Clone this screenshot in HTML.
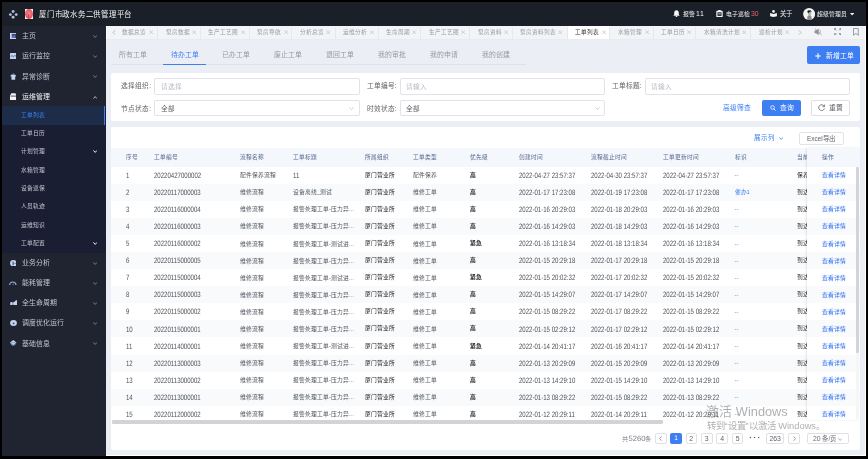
<!DOCTYPE html>
<html lang="zh-CN">
<head>
<meta charset="utf-8">
<style>
*{box-sizing:border-box;margin:0;padding:0}
html,body{width:868px;height:459px;overflow:hidden;background:#000}
body{position:relative;font-family:"Liberation Sans",sans-serif;color:#606266}
.a{position:absolute;white-space:nowrap}
svg{display:block}
#hdr{left:2px;top:2px;width:864px;height:24px;background:#1b1f28}
#side{left:2px;top:26px;width:103.5px;height:430px;background:#1f2430}
#main{left:105.5px;top:26px;width:760.5px;height:429px;background:#ebeef5}
.ht{font-size:5.9px;color:#eceef2;line-height:8px;top:10.4px;font-weight:500}
.mi{left:21.6px;font-size:6.9px;line-height:10px;color:#c3c7d0;height:10px}
.si{left:21.1px;font-size:5.75px;line-height:8px;color:#c3c7d0;height:8px}
.chev{left:92.6px;width:4.4px;height:3px}
.ic{left:9.6px;width:6.6px;height:6px}
</style>
</head>
<body>
<div id="root" style="position:absolute;left:0;top:0;width:868px;height:459px;will-change:transform">
<div class="a" id="hdr"></div>
<div class="a" id="side"></div>
<div class="a" id="main"></div>
<!-- header -->
<svg class="a" style="left:8px;top:8.6px" width="11" height="11" viewBox="0 0 11 11">
<circle cx="5.1" cy="2.5" r="1.45" fill="#aebbdb"/><circle cx="2.4" cy="5.6" r="1.45" fill="#aebbdb"/>
<circle cx="8.2" cy="5.6" r="1.45" fill="#aebbdb"/><circle cx="5.1" cy="8.3" r="1.45" fill="#aebbdb"/></svg>
<div class="a" style="left:24.6px;top:9px;width:8.2px;height:9.9px;background:#f4f4f4"></div>
<div class="a" style="left:24.7px;top:9.2px;width:8px;height:9.5px;border-radius:50%;background:radial-gradient(circle at 50% 45%,#f08a90 0%,#e85a62 55%,#e04850 100%)"></div>
<div class="a" style="left:28.4px;top:13.5px;width:0.8px;height:5px;background:#e0454e"></div>
<div class="a" style="left:38.6px;top:10.2px;font-size:7.7px;line-height:10px;color:#f2f3f5;font-weight:500;transform:scaleX(0.97);transform-origin:0 50%">厦门市政水务二供管理平台</div>

<svg class="a" style="left:672.8px;top:10px" width="7" height="7" viewBox="0 0 7 7"><path d="M3.5 0.3C2 0.3 1.2 1.5 1.2 3V4.6L0.3 5.7H6.7L5.8 4.6V3C5.8 1.5 5 0.3 3.5 0.3Z" fill="#f6f6f6"/><circle cx="3.5" cy="6.3" r="0.8" fill="#f6f6f6"/></svg>
<div class="a ht" style="left:682.5px;top:9.9px;color:#f2f3f5">报警<span style="font-size:6.9px;margin-left:1.6px;letter-spacing:0.6px">11</span></div>
<svg class="a" style="left:715.7px;top:10.2px" width="7" height="7.2" viewBox="0 0 7 7.2"><rect x="0.3" y="0.8" width="6.4" height="6.3" rx="0.7" fill="#f6f6f6"/><rect x="1.5" y="2.3" width="4" height="3.6" fill="#1b1f28"/><rect x="2.2" y="0" width="2.6" height="1.5" rx="0.3" fill="#f6f6f6"/><rect x="2.1" y="3.5" width="2.8" height="0.8" fill="#f6f6f6"/></svg>
<div class="a ht" style="left:725.5px;top:9.9px;color:#f2f3f5">电子巡检<span style="color:#e8646b;font-size:6.9px;margin-left:1.5px;font-weight:400">30</span></div>
<svg class="a" style="left:770.2px;top:10.2px" width="7" height="7" viewBox="0 0 7 7"><circle cx="3.5" cy="1.4" r="1.3" fill="#f6f6f6"/><path d="M0.1 2.9L3.5 4.1L6.9 2.9V6.3L3.5 7L0.1 6.3Z" fill="#f6f6f6"/></svg>
<div class="a ht" style="left:780px;top:9.7px;font-size:6.3px;color:#f2f3f5">关于</div>
<svg class="a" style="left:803.2px;top:7.9px" width="12.2" height="12.2" viewBox="0 0 12.2 12.2"><circle cx="6.1" cy="6.1" r="6" fill="#f4f4f4"/>
<path d="M4 12L4.5 8.4L5.5 7.2H7.6L8.4 8.6L8.8 12Z" fill="#8a8a8a"/><ellipse cx="6.6" cy="5.2" rx="1.6" ry="2.1" fill="#b0b0b0"/><path d="M4.6 4.4C4.6 2.6 6 2 7 2.2C8.2 2.4 8.6 3.2 8.4 4.2L7.4 3.6L5.8 4.6Z" fill="#1e1e1e"/><ellipse cx="5.4" cy="3.6" rx="0.9" ry="1.1" fill="#111"/></svg>
<div class="a ht" style="left:817.4px;top:9.9px;font-size:5.8px;color:#f2f3f5">超级管理员</div>
<svg class="a" style="left:849.8px;top:13px" width="4.2" height="2.6" viewBox="0 0 4.2 2.6"><path d="M0 0H4.2L2.1 2.6Z" fill="#f2f2f2"/></svg>
<!-- sidebar -->
<div class="a" style="left:2px;top:106px;width:103.5px;height:147px;background:#1a1e33"></div>
<div class="a" style="left:2px;top:105.8px;width:102.2px;height:19.2px;background:#1c2c49"></div>
<div class="a" style="left:104px;top:105.8px;width:1.4px;height:19.2px;background:#3e7ef2"></div>
<svg class="a" style="left:9.6px;top:32.6px" width="6.8" height="6.2" viewBox="0 0 6.8 6.2"><rect x="0" y="0" width="6.8" height="6.2" fill="#c4d3ee"/><rect x="1.8" y="0.9" width="4.2" height="4" fill="#3a3f7a"/><rect x="2.6" y="2.6" width="0.9" height="2.3" fill="#8ea6dc"/><rect x="4.2" y="1.8" width="0.9" height="3.1" fill="#7a6fc8"/></svg>
<div class="a mi" style="top:31.40px;color:#c0c4cc">主页</div>
<svg class="a chev" style="left:92.6px;top:34.90px" viewBox="0 0 4.4 3"><path d="M0.4 0.4L2.2 2.4L4 0.4" stroke="#8a909c" stroke-width="0.8" fill="none"/></svg>
<svg class="a" style="left:9.7px;top:52.9px" width="6.6" height="6.1" viewBox="0 0 6.6 6.1"><rect x="0" y="0" width="6.6" height="6.1" rx="0.6" fill="#c4d3ee"/><path d="M0.6 3.3L2.2 2.8L3.4 3.8L4.6 2.6L6 3.1" stroke="#4a4f7a" stroke-width="0.8" fill="none"/></svg>
<div class="a mi" style="top:51.40px;color:#c0c4cc">运行监控</div>
<svg class="a chev" style="left:92.6px;top:54.90px" viewBox="0 0 4.4 3"><path d="M0.4 0.4L2.2 2.4L4 0.4" stroke="#8a909c" stroke-width="0.8" fill="none"/></svg>
<svg class="a" style="left:9.7px;top:73.1px" width="6.6" height="6.8" viewBox="0 0 6.6 6.8"><path d="M3.3 0.3L4.6 1.5H2Z" fill="#9fb2dc"/><path d="M1.2 1.8H5.4L6.4 3.2L5.2 3.6V6.8H1.4V3.6L0.2 3.2Z" fill="#c4d3ee"/></svg>
<div class="a mi" style="top:71.80px;color:#c0c4cc">异常诊断</div>
<svg class="a chev" style="left:92.6px;top:75.30px" viewBox="0 0 4.4 3"><path d="M0.4 0.4L2.2 2.4L4 0.4" stroke="#8a909c" stroke-width="0.8" fill="none"/></svg>
<svg class="a" style="left:9.7px;top:92.9px" width="6.8" height="7" viewBox="0 0 6.8 7"><path d="M1.4 0.2H5.4L6.8 2.6V7H0V2.6Z" fill="#f4f4f6"/><rect x="0.6" y="2.6" width="5.6" height="1" fill="#4b5070"/></svg>
<div class="a mi" style="top:92.00px;color:#f2f3f6">运维管理</div>
<svg class="a chev" style="left:92.6px;top:95.50px" viewBox="0 0 4.4 3"><path d="M0.4 2.6L2.2 0.6L4 2.6" stroke="#e0e2e8" stroke-width="0.8" fill="none"/></svg>
<svg class="a" style="left:9.7px;top:259.6px" width="6.8" height="6.6" viewBox="0 0 6.8 6.6"><circle cx="3.4" cy="3.3" r="3.3" fill="#c4d3ee"/><path d="M3.1 1.6V5.2" stroke="#3a4470" stroke-width="1"/><path d="M3.4 3.3H6.6" stroke="#3a4470" stroke-width="0.5"/></svg>
<div class="a mi" style="top:258.30px;color:#c0c4cc">业务分析</div>
<svg class="a chev" style="left:92.6px;top:261.80px" viewBox="0 0 4.4 3"><path d="M0.4 0.4L2.2 2.4L4 0.4" stroke="#8a909c" stroke-width="0.8" fill="none"/></svg>
<svg class="a" style="left:9.2px;top:280.6px" width="7.6" height="4.4" viewBox="0 0 7.6 4.4"><path d="M0.6 4.2A3.2 3.2 0 0 1 7 4.2" stroke="#9fb2dc" stroke-width="1.1" fill="none"/><path d="M3.8 4.2L4.6 2.4" stroke="#8aa0d0" stroke-width="0.7"/></svg>
<div class="a mi" style="top:278.10px;color:#c0c4cc">能耗管理</div>
<svg class="a chev" style="left:92.6px;top:281.60px" viewBox="0 0 4.4 3"><path d="M0.4 0.4L2.2 2.4L4 0.4" stroke="#8a909c" stroke-width="0.8" fill="none"/></svg>
<svg class="a" style="left:9.5px;top:299.6px" width="7.1" height="5.9" viewBox="0 0 7.1 5.9"><path d="M0.2 5.9V2.6L2.4 1.8V3L4.8 1.4L6 0.2H7V5.9Z" fill="#c4d3ee"/><rect x="2.2" y="3.6" width="1.2" height="1.2" fill="#5a6490"/></svg>
<div class="a mi" style="top:298.10px;color:#c0c4cc">全生命周期</div>
<svg class="a chev" style="left:92.6px;top:301.60px" viewBox="0 0 4.4 3"><path d="M0.4 0.4L2.2 2.4L4 0.4" stroke="#8a909c" stroke-width="0.8" fill="none"/></svg>
<svg class="a" style="left:9.8px;top:320px" width="7" height="6" viewBox="0 0 7 6"><ellipse cx="3.5" cy="3" rx="3.4" ry="3" fill="#c4d3ee"/><circle cx="3.6" cy="3.3" r="0.9" fill="#3a4470"/></svg>
<div class="a mi" style="top:318.30px;color:#c0c4cc">调度优化运行</div>
<svg class="a chev" style="left:92.6px;top:321.80px" viewBox="0 0 4.4 3"><path d="M0.4 0.4L2.2 2.4L4 0.4" stroke="#8a909c" stroke-width="0.8" fill="none"/></svg>
<svg class="a" style="left:10px;top:339.6px" width="6.5" height="6.4" viewBox="0 0 6.5 6.4"><path d="M3.25 0L6.5 2.6L3.25 5.2L0 2.6Z" fill="#c4d3ee"/><path d="M0.4 3.6L3.25 5.8L6.1 3.6" stroke="#9fb2dc" stroke-width="0.7" fill="none"/><path d="M1 2.6H5.5" stroke="#6a7aa8" stroke-width="0.5"/></svg>
<div class="a mi" style="top:338.50px;color:#c0c4cc">基础信息</div>
<svg class="a chev" style="left:92.6px;top:342.00px" viewBox="0 0 4.4 3"><path d="M0.4 0.4L2.2 2.4L4 0.4" stroke="#8a909c" stroke-width="0.8" fill="none"/></svg>
<div class="a si" style="top:110.85px;color:#3f80f2">工单列表</div>
<div class="a si" style="top:129.45px;color:#c0c4cc">工单日历</div>
<div class="a si" style="top:147.35px;color:#c0c4cc">计划管理</div>
<svg class="a chev" style="left:92.6px;top:150.05px" viewBox="0 0 4.4 3"><path d="M0.4 0.4L2.2 2.4L4 0.4" stroke="#f2f3f6" stroke-width="1.0" fill="none"/></svg>
<div class="a si" style="top:166.05px;color:#c0c4cc">水箱管理</div>
<div class="a si" style="top:184.25px;color:#c0c4cc">设备巡保</div>
<div class="a si" style="top:202.35px;color:#c0c4cc">人员轨迹</div>
<div class="a si" style="top:220.85px;color:#c0c4cc">运维知识</div>
<div class="a si" style="top:239.05px;color:#c0c4cc">工单配置</div>
<svg class="a chev" style="left:92.6px;top:241.75px" viewBox="0 0 4.4 3"><path d="M0.4 0.4L2.2 2.4L4 0.4" stroke="#f2f3f6" stroke-width="1.0" fill="none"/></svg>
<!-- tabbar -->
<div class="a" style="left:105.5px;top:26px;width:760px;height:13px;background:#f3f4f7"></div>
<div class="a" style="left:105.5px;top:26px;width:1.2px;height:13px;background:#fdfdfe"></div>
<div class="a" style="left:105.5px;top:38.6px;width:760px;height:0.8px;background:#e9ebf0"></div>
<div class="a" style="left:567.8px;top:26px;width:42px;height:12.7px;background:#ffffff"></div>
<svg class="a" style="left:111.6px;top:29.6px" width="4" height="5" viewBox="0 0 4 5"><path d="M3 0.4L1 2.5L3 4.6" stroke="#9aa3b8" stroke-width="0.7" fill="none"/></svg>
<div class="a" style="left:122px;top:28.3px;font-size:5.65px;line-height:8px;color:#979aa2">数据总览</div>
<svg class="a" style="left:148.52px;top:30.3px" width="4.4" height="4.4" viewBox="0 0 4.4 4.4"><path d="M0.4 0.4L4 4M4 0.4L0.4 4" stroke="#a4b0c8" stroke-width="0.55"/></svg>
<div class="a" style="left:165.5px;top:28.3px;font-size:5.65px;line-height:8px;color:#979aa2">泵房数据</div>
<svg class="a" style="left:192.02px;top:30.3px" width="4.4" height="4.4" viewBox="0 0 4.4 4.4"><path d="M0.4 0.4L4 4M4 0.4L0.4 4" stroke="#a4b0c8" stroke-width="0.55"/></svg>
<div class="a" style="left:208.2px;top:28.3px;font-size:5.65px;line-height:8px;color:#979aa2">生产工艺图</div>
<svg class="a" style="left:240.50px;top:30.3px" width="4.4" height="4.4" viewBox="0 0 4.4 4.4"><path d="M0.4 0.4L4 4M4 0.4L0.4 4" stroke="#a4b0c8" stroke-width="0.55"/></svg>
<div class="a" style="left:257.3px;top:28.3px;font-size:5.65px;line-height:8px;color:#979aa2">泵房导航</div>
<svg class="a" style="left:283.82px;top:30.3px" width="4.4" height="4.4" viewBox="0 0 4.4 4.4"><path d="M0.4 0.4L4 4M4 0.4L0.4 4" stroke="#a4b0c8" stroke-width="0.55"/></svg>
<div class="a" style="left:299.9px;top:28.3px;font-size:5.65px;line-height:8px;color:#979aa2">分析总览</div>
<svg class="a" style="left:326.42px;top:30.3px" width="4.4" height="4.4" viewBox="0 0 4.4 4.4"><path d="M0.4 0.4L4 4M4 0.4L0.4 4" stroke="#a4b0c8" stroke-width="0.55"/></svg>
<div class="a" style="left:343.1px;top:28.3px;font-size:5.65px;line-height:8px;color:#979aa2">运维分析</div>
<svg class="a" style="left:369.62px;top:30.3px" width="4.4" height="4.4" viewBox="0 0 4.4 4.4"><path d="M0.4 0.4L4 4M4 0.4L0.4 4" stroke="#a4b0c8" stroke-width="0.55"/></svg>
<div class="a" style="left:385.7px;top:28.3px;font-size:5.65px;line-height:8px;color:#979aa2">生命周期</div>
<svg class="a" style="left:412.22px;top:30.3px" width="4.4" height="4.4" viewBox="0 0 4.4 4.4"><path d="M0.4 0.4L4 4M4 0.4L0.4 4" stroke="#a4b0c8" stroke-width="0.55"/></svg>
<div class="a" style="left:428.6px;top:28.3px;font-size:5.65px;line-height:8px;color:#979aa2">生产工艺图</div>
<svg class="a" style="left:460.90px;top:30.3px" width="4.4" height="4.4" viewBox="0 0 4.4 4.4"><path d="M0.4 0.4L4 4M4 0.4L0.4 4" stroke="#a4b0c8" stroke-width="0.55"/></svg>
<div class="a" style="left:477.8px;top:28.3px;font-size:5.65px;line-height:8px;color:#979aa2">泵房资料</div>
<svg class="a" style="left:504.32px;top:30.3px" width="4.4" height="4.4" viewBox="0 0 4.4 4.4"><path d="M0.4 0.4L4 4M4 0.4L0.4 4" stroke="#a4b0c8" stroke-width="0.55"/></svg>
<div class="a" style="left:520.4px;top:28.3px;font-size:5.65px;line-height:8px;color:#979aa2">泵房资料列表</div>
<svg class="a" style="left:558.48px;top:30.3px" width="4.4" height="4.4" viewBox="0 0 4.4 4.4"><path d="M0.4 0.4L4 4M4 0.4L0.4 4" stroke="#a4b0c8" stroke-width="0.55"/></svg>
<div class="a" style="left:575.1px;top:28.3px;font-size:5.65px;line-height:8px;color:#303133">工单列表</div>
<svg class="a" style="left:601.62px;top:30.3px" width="4.4" height="4.4" viewBox="0 0 4.4 4.4"><path d="M0.4 0.4L4 4M4 0.4L0.4 4" stroke="#a4b0c8" stroke-width="0.55"/></svg>
<div class="a" style="left:618.1px;top:28.3px;font-size:5.65px;line-height:8px;color:#979aa2">水箱管理</div>
<svg class="a" style="left:644.62px;top:30.3px" width="4.4" height="4.4" viewBox="0 0 4.4 4.4"><path d="M0.4 0.4L4 4M4 0.4L0.4 4" stroke="#a4b0c8" stroke-width="0.55"/></svg>
<div class="a" style="left:660.9px;top:28.3px;font-size:5.65px;line-height:8px;color:#979aa2">工单日历</div>
<svg class="a" style="left:687.42px;top:30.3px" width="4.4" height="4.4" viewBox="0 0 4.4 4.4"><path d="M0.4 0.4L4 4M4 0.4L0.4 4" stroke="#a4b0c8" stroke-width="0.55"/></svg>
<div class="a" style="left:703.8px;top:28.3px;font-size:5.65px;line-height:8px;color:#979aa2">水箱清洗计划</div>
<svg class="a" style="left:741.88px;top:30.3px" width="4.4" height="4.4" viewBox="0 0 4.4 4.4"><path d="M0.4 0.4L4 4M4 0.4L0.4 4" stroke="#a4b0c8" stroke-width="0.55"/></svg>
<div class="a" style="left:758.8px;top:28.3px;font-size:5.65px;line-height:8px;color:#979aa2">巡检计划</div>
<svg class="a" style="left:785.32px;top:30.3px" width="4.4" height="4.4" viewBox="0 0 4.4 4.4"><path d="M0.4 0.4L4 4M4 0.4L0.4 4" stroke="#a4b0c8" stroke-width="0.55"/></svg>
<div class="a" style="left:156.90px;top:26.5px;width:0.8px;height:12px;background:#e6e8ec"></div>
<div class="a" style="left:199.70px;top:26.5px;width:0.8px;height:12px;background:#e6e8ec"></div>
<div class="a" style="left:249.00px;top:26.5px;width:0.8px;height:12px;background:#e6e8ec"></div>
<div class="a" style="left:290.90px;top:26.5px;width:0.8px;height:12px;background:#e6e8ec"></div>
<div class="a" style="left:334.60px;top:26.5px;width:0.8px;height:12px;background:#e6e8ec"></div>
<div class="a" style="left:377.80px;top:26.5px;width:0.8px;height:12px;background:#e6e8ec"></div>
<div class="a" style="left:419.90px;top:26.5px;width:0.8px;height:12px;background:#e6e8ec"></div>
<div class="a" style="left:468.80px;top:26.5px;width:0.8px;height:12px;background:#e6e8ec"></div>
<div class="a" style="left:512.00px;top:26.5px;width:0.8px;height:12px;background:#e6e8ec"></div>
<div class="a" style="left:567.20px;top:26.5px;width:0.8px;height:12px;background:#e6e8ec"></div>
<div class="a" style="left:609.30px;top:26.5px;width:0.8px;height:12px;background:#e6e8ec"></div>
<div class="a" style="left:653.00px;top:26.5px;width:0.8px;height:12px;background:#e6e8ec"></div>
<div class="a" style="left:695.10px;top:26.5px;width:0.8px;height:12px;background:#e6e8ec"></div>
<div class="a" style="left:749.70px;top:26.5px;width:0.8px;height:12px;background:#e6e8ec"></div>
<svg class="a" style="left:798.4px;top:29.6px" width="4" height="5" viewBox="0 0 4 5"><path d="M1 0.4L3 2.5L1 4.6" stroke="#9aa3b8" stroke-width="0.7" fill="none"/></svg>
<svg class="a" style="left:814px;top:28.4px" width="8.4" height="7.6" viewBox="0 0 8.4 7.6"><path d="M0.6 2.4H2.2L4.6 0.4V7.2L2.2 5.2H0.6Z" fill="#8c8f98"/><path d="M5.4 1.6C6.6 2.4 6.8 4.6 5.6 5.8" stroke="#8c8f98" stroke-width="0.7" fill="none"/><path d="M0.8 0.6L7.6 7" stroke="#8c8f98" stroke-width="0.7"/></svg>
<svg class="a" style="left:833.6px;top:28.4px" width="7.4" height="7.4" viewBox="0 0 7.4 7.4"><path d="M0.3 0.3H2.4L0.3 2.4Z M7.1 0.3H5L7.1 2.4Z M0.3 7.1H2.4L0.3 5Z M7.1 7.1H5L7.1 5Z" fill="#7d8494"/><path d="M0.6 0.6L2.4 2.4M6.8 0.6L5 2.4M0.6 6.8L2.4 5M6.8 6.8L5 5" stroke="#7d8494" stroke-width="0.8"/></svg>
<svg class="a" style="left:853.2px;top:28.2px" width="5.8" height="7.8" viewBox="0 0 5.8 7.8"><path d="M0.5 0.5H5.3V7.3L2.9 5.4L0.5 7.3Z" stroke="#8c93a3" stroke-width="0.9" fill="none"/></svg>
<div class="a" style="left:865px;top:26px;width:1px;height:430.2px;background:#ffffff"></div>
<div class="a" style="left:105.5px;top:455px;width:760.5px;height:1.2px;background:#ffffff"></div>
<!-- subtabs -->
<div class="a" style="left:118.70px;top:50px;font-size:6.85px;line-height:10px;color:#979aa2">所有工单</div>
<div class="a" style="left:170.55px;top:50px;font-size:6.85px;line-height:10px;color:#3b7ff2">待办工单</div>
<div class="a" style="left:222.40px;top:50px;font-size:6.85px;line-height:10px;color:#979aa2">已办工单</div>
<div class="a" style="left:274.25px;top:50px;font-size:6.85px;line-height:10px;color:#979aa2">废止工单</div>
<div class="a" style="left:326.10px;top:50px;font-size:6.85px;line-height:10px;color:#979aa2">退回工单</div>
<div class="a" style="left:377.95px;top:50px;font-size:6.85px;line-height:10px;color:#979aa2">我的审批</div>
<div class="a" style="left:429.80px;top:50px;font-size:6.85px;line-height:10px;color:#979aa2">我的申请</div>
<div class="a" style="left:481.65px;top:50px;font-size:6.85px;line-height:10px;color:#979aa2">我的创建</div>
<div class="a" style="left:111px;top:63.9px;width:415px;height:1px;background:#dfe2e8"></div>
<div class="a" style="left:162.9px;top:63.5px;width:43.6px;height:1.7px;background:#3b7ff2"></div>
<div class="a" style="left:807.2px;top:46.1px;width:52.7px;height:17.8px;background:#3e7ef3;border-radius:2px"></div>
<svg class="a" style="left:815.2px;top:52.6px" width="6" height="6" viewBox="0 0 6 6"><path d="M3 0.2V5.8M0.2 3H5.8" stroke="#fff" stroke-width="1.1"/></svg>
<div class="a" style="left:825.6px;top:50.6px;font-size:6.8px;line-height:10px;color:#fff">新增工单</div>
<!-- filter card -->
<div class="a" style="left:111px;top:72.7px;width:749px;height:48.6px;background:#fff;border-radius:2px"></div>
<div class="a" style="left:121.2px;top:81.40px;font-size:6.67px;line-height:10px;color:#606266">选择组织:</div>
<div class="a" style="left:121.2px;top:103.60px;font-size:6.67px;line-height:10px;color:#606266">节点状态:</div>
<div class="a" style="left:366.7px;top:81.40px;font-size:6.67px;line-height:10px;color:#606266">工单编号:</div>
<div class="a" style="left:366.7px;top:103.60px;font-size:6.67px;line-height:10px;color:#606266">时效状态:</div>
<div class="a" style="left:611.7px;top:81.40px;font-size:6.67px;line-height:10px;color:#606266">工单标题:</div>
<div class="a" style="left:154.4px;top:77.6px;width:205.40px;height:17.20px;border:0.8px solid #e1e3e8;border-radius:2px;background:#fff"></div>
<div class="a" style="left:160.70px;top:81.50px;font-size:6.65px;line-height:10px;color:#b8bcc4">请选择</div>
<div class="a" style="left:154.4px;top:100.1px;width:205.40px;height:16.40px;border:0.8px solid #e1e3e8;border-radius:2px;background:#fff"></div>
<div class="a" style="left:160.70px;top:103.90px;font-size:6.65px;line-height:10px;color:#606266">全部</div>
<svg class="a" style="left:349.30px;top:107.30px" width="5" height="3" viewBox="0 0 5 3"><path d="M0.4 0.4L2.5 2.6L4.6 0.4" stroke="#b0b4bc" stroke-width="0.6" fill="none"/></svg>
<div class="a" style="left:400px;top:77.6px;width:205.30px;height:17.20px;border:0.8px solid #e1e3e8;border-radius:2px;background:#fff"></div>
<div class="a" style="left:406.30px;top:81.50px;font-size:6.65px;line-height:10px;color:#b8bcc4">请输入</div>
<div class="a" style="left:400px;top:100.1px;width:205.30px;height:16.40px;border:0.8px solid #e1e3e8;border-radius:2px;background:#fff"></div>
<div class="a" style="left:406.30px;top:103.90px;font-size:6.65px;line-height:10px;color:#606266">全部</div>
<svg class="a" style="left:594.80px;top:107.30px" width="5" height="3" viewBox="0 0 5 3"><path d="M0.4 0.4L2.5 2.6L4.6 0.4" stroke="#b0b4bc" stroke-width="0.6" fill="none"/></svg>
<div class="a" style="left:644.5px;top:77.6px;width:205.80px;height:17.20px;border:0.8px solid #e1e3e8;border-radius:2px;background:#fff"></div>
<div class="a" style="left:650.80px;top:81.50px;font-size:6.65px;line-height:10px;color:#b8bcc4">请输入</div>
<div class="a" style="left:723px;top:103.2px;font-size:6.8px;line-height:10px;color:#3f80f2">高级筛查</div>
<div class="a" style="left:761.8px;top:99.9px;width:39.2px;height:16.6px;background:#3e7ef3;border-radius:2px"></div>
<svg class="a" style="left:769.6px;top:105.2px" width="6" height="6" viewBox="0 0 6 6"><circle cx="2.5" cy="2.5" r="1.8" stroke="#fff" stroke-width="0.8" fill="none"/><path d="M3.8 3.8L5.5 5.5" stroke="#fff" stroke-width="0.9"/></svg>
<div class="a" style="left:779.6px;top:103.2px;font-size:6.8px;line-height:10px;color:#fff">查询</div>
<div class="a" style="left:811.2px;top:99.9px;width:39px;height:16.6px;background:#fff;border:0.8px solid #dcdfe6;border-radius:2px"></div>
<svg class="a" style="left:818.4px;top:104px" width="7.4" height="7.4" viewBox="0 0 7.4 7.4"><path d="M6.1 2.2A2.9 2.9 0 1 0 6.4 4.4" stroke="#606266" stroke-width="0.8" fill="none"/><path d="M6.6 0.6V2.7H4.5" stroke="#606266" stroke-width="0.8" fill="none"/></svg>
<div class="a" style="left:829px;top:103.2px;font-size:6.8px;line-height:10px;color:#606266">重置</div>
<!-- table card -->
<div class="a" style="left:111px;top:127px;width:749px;height:323.3px;background:#fff;border-radius:2px"></div>
<div class="a" style="left:754px;top:133.4px;font-size:6.5px;line-height:10px;color:#3f80f2">展示列</div>
<svg class="a" style="left:779px;top:137px" width="4.4" height="3" viewBox="0 0 4.4 3"><path d="M0.4 0.4L2.2 2.4L4 0.4" stroke="#3f80f2" stroke-width="0.8" fill="none"/></svg>
<div class="a" style="left:799px;top:131.8px;width:44.7px;height:13.6px;border:0.8px solid #e1e3e8;border-radius:2px;background:#fff"></div>
<div class="a" style="left:807px;top:133.6px;font-size:6.4px;line-height:10px;color:#606266">Excel导出</div>
<div class="a" style="left:111px;top:148px;width:749px;height:19.3px;background:#f4f7fc"></div>
<div class="a" style="left:111px;top:148px;width:696px;height:302px;overflow:hidden">
<div class="a" style="left:14.60px;top:5.2px;font-size:5.7px;line-height:8px;color:#56688e">序号</div>
<div class="a" style="left:42.90px;top:5.2px;font-size:5.7px;line-height:8px;color:#56688e">工单编号</div>
<div class="a" style="left:129.10px;top:5.2px;font-size:5.7px;line-height:8px;color:#56688e">流程名称</div>
<div class="a" style="left:182.10px;top:5.2px;font-size:5.7px;line-height:8px;color:#56688e">工单标题</div>
<div class="a" style="left:253.60px;top:5.2px;font-size:5.7px;line-height:8px;color:#56688e">所属组织</div>
<div class="a" style="left:301.80px;top:5.2px;font-size:5.7px;line-height:8px;color:#56688e">工单类型</div>
<div class="a" style="left:358.80px;top:5.2px;font-size:5.7px;line-height:8px;color:#56688e">优先级</div>
<div class="a" style="left:407.90px;top:5.2px;font-size:5.7px;line-height:8px;color:#56688e">创建时间</div>
<div class="a" style="left:479.60px;top:5.2px;font-size:5.7px;line-height:8px;color:#56688e">流程截止时间</div>
<div class="a" style="left:551.60px;top:5.2px;font-size:5.7px;line-height:8px;color:#56688e">工单更新时间</div>
<div class="a" style="left:623.50px;top:5.2px;font-size:5.7px;line-height:8px;color:#56688e">标识</div>
<div class="a" style="left:685.70px;top:5.2px;font-size:5.7px;line-height:8px;color:#56688e">当前处理节点</div>
<div class="a" style="left:14.60px;top:24.01px;line-height:8px;font-size:7.8px;color:#4e5258;transform:scaleX(0.777);transform-origin:0 50%;text-rendering:geometricPrecision">1</div>
<div class="a" style="left:42.90px;top:24.01px;line-height:8px;font-size:7.8px;color:#4e5258;transform:scaleX(0.777);transform-origin:0 50%;text-rendering:geometricPrecision">20220427000002</div>
<div class="a" style="left:407.90px;top:24.01px;line-height:8px;font-size:7.8px;color:#4e5258;transform:scaleX(0.777);transform-origin:0 50%;text-rendering:geometricPrecision">2022-04-27 23:57:37</div>
<div class="a" style="left:479.60px;top:24.01px;line-height:8px;font-size:7.8px;color:#4e5258;transform:scaleX(0.777);transform-origin:0 50%;text-rendering:geometricPrecision">2022-04-30 23:57:37</div>
<div class="a" style="left:551.60px;top:24.01px;line-height:8px;font-size:7.8px;color:#4e5258;transform:scaleX(0.777);transform-origin:0 50%;text-rendering:geometricPrecision">2022-04-27 23:57:37</div>
<div class="a" style="left:182.10px;top:24.01px;line-height:8px;font-size:7.8px;color:#4e5258;transform:scaleX(0.777);transform-origin:0 50%;text-rendering:geometricPrecision">11</div>
<div class="a" style="left:129.10px;top:23.31px;line-height:8px;font-size:5.75px;color:#50545c">配件保养流程</div>
<div class="a" style="left:253.60px;top:23.31px;line-height:8px;font-size:5.75px;color:#1e1f22;margin-top:-0.4px;font-weight:500">厦门营业所</div>
<div class="a" style="left:301.80px;top:23.31px;line-height:8px;font-size:5.75px;color:#50545c">配件保养</div>
<div class="a" style="left:359.20px;top:23.31px;line-height:8px;font-size:5.75px;color:#1e1f22;margin-top:-0.4px;font-weight:700">高</div>
<div class="a" style="left:623.50px;top:23.31px;line-height:8px;font-size:5.75px;color:#3f80f2">--</div>
<div class="a" style="left:685.70px;top:23.31px;line-height:8px;font-size:5.75px;color:#1e1f22;margin-top:-0.4px">保养中</div>
<div class="a" style="left:0;top:36.41px;width:749px;height:17.01px;background:#f9fafc"></div>
<div class="a" style="left:14.60px;top:41.06px;line-height:8px;font-size:7.8px;color:#4e5258;transform:scaleX(0.777);transform-origin:0 50%;text-rendering:geometricPrecision">2</div>
<div class="a" style="left:42.90px;top:41.06px;line-height:8px;font-size:7.8px;color:#4e5258;transform:scaleX(0.777);transform-origin:0 50%;text-rendering:geometricPrecision">20220117000003</div>
<div class="a" style="left:407.90px;top:41.06px;line-height:8px;font-size:7.8px;color:#4e5258;transform:scaleX(0.777);transform-origin:0 50%;text-rendering:geometricPrecision">2022-01-17 17:23:08</div>
<div class="a" style="left:479.60px;top:41.06px;line-height:8px;font-size:7.8px;color:#4e5258;transform:scaleX(0.777);transform-origin:0 50%;text-rendering:geometricPrecision">2022-01-19 17:23:08</div>
<div class="a" style="left:551.60px;top:41.06px;line-height:8px;font-size:7.8px;color:#4e5258;transform:scaleX(0.777);transform-origin:0 50%;text-rendering:geometricPrecision">2022-01-17 17:23:08</div>
<div class="a" style="left:182.10px;top:40.36px;line-height:8px;font-size:5.75px;color:#50545c">设备离线_测试</div>
<div class="a" style="left:129.10px;top:40.36px;line-height:8px;font-size:5.75px;color:#50545c">维修流程</div>
<div class="a" style="left:253.60px;top:40.36px;line-height:8px;font-size:5.75px;color:#1e1f22;margin-top:-0.4px;font-weight:500">厦门营业所</div>
<div class="a" style="left:301.80px;top:40.36px;line-height:8px;font-size:5.75px;color:#50545c">维修工单</div>
<div class="a" style="left:359.20px;top:40.36px;line-height:8px;font-size:5.75px;color:#1e1f22;margin-top:-0.4px;font-weight:700">高</div>
<div class="a" style="left:623.50px;top:40.36px;line-height:8px;font-size:5.75px;color:#3f80f2">催办1</div>
<div class="a" style="left:685.70px;top:40.36px;line-height:8px;font-size:5.75px;color:#1e1f22;margin-top:-0.4px">到达现场</div>
<div class="a" style="left:14.60px;top:58.13px;line-height:8px;font-size:7.8px;color:#4e5258;transform:scaleX(0.777);transform-origin:0 50%;text-rendering:geometricPrecision">3</div>
<div class="a" style="left:42.90px;top:58.13px;line-height:8px;font-size:7.8px;color:#4e5258;transform:scaleX(0.777);transform-origin:0 50%;text-rendering:geometricPrecision">20220116000004</div>
<div class="a" style="left:407.90px;top:58.13px;line-height:8px;font-size:7.8px;color:#4e5258;transform:scaleX(0.777);transform-origin:0 50%;text-rendering:geometricPrecision">2022-01-16 20:29:03</div>
<div class="a" style="left:479.60px;top:58.13px;line-height:8px;font-size:7.8px;color:#4e5258;transform:scaleX(0.777);transform-origin:0 50%;text-rendering:geometricPrecision">2022-01-18 20:29:03</div>
<div class="a" style="left:551.60px;top:58.13px;line-height:8px;font-size:7.8px;color:#4e5258;transform:scaleX(0.777);transform-origin:0 50%;text-rendering:geometricPrecision">2022-01-16 20:29:03</div>
<div class="a" style="left:182.10px;top:57.43px;line-height:8px;font-size:5.75px;color:#50545c">报警处理工单-压力异...</div>
<div class="a" style="left:129.10px;top:57.43px;line-height:8px;font-size:5.75px;color:#50545c">维修流程</div>
<div class="a" style="left:253.60px;top:57.43px;line-height:8px;font-size:5.75px;color:#1e1f22;margin-top:-0.4px;font-weight:500">厦门营业所</div>
<div class="a" style="left:301.80px;top:57.43px;line-height:8px;font-size:5.75px;color:#50545c">维修工单</div>
<div class="a" style="left:359.20px;top:57.43px;line-height:8px;font-size:5.75px;color:#1e1f22;margin-top:-0.4px;font-weight:700">高</div>
<div class="a" style="left:623.50px;top:57.43px;line-height:8px;font-size:5.75px;color:#3f80f2">--</div>
<div class="a" style="left:685.70px;top:57.43px;line-height:8px;font-size:5.75px;color:#1e1f22;margin-top:-0.4px">到达现场</div>
<div class="a" style="left:0;top:70.43px;width:749px;height:17.01px;background:#f9fafc"></div>
<div class="a" style="left:14.60px;top:75.19px;line-height:8px;font-size:7.8px;color:#4e5258;transform:scaleX(0.777);transform-origin:0 50%;text-rendering:geometricPrecision">4</div>
<div class="a" style="left:42.90px;top:75.19px;line-height:8px;font-size:7.8px;color:#4e5258;transform:scaleX(0.777);transform-origin:0 50%;text-rendering:geometricPrecision">20220116000003</div>
<div class="a" style="left:407.90px;top:75.19px;line-height:8px;font-size:7.8px;color:#4e5258;transform:scaleX(0.777);transform-origin:0 50%;text-rendering:geometricPrecision">2022-01-16 14:29:03</div>
<div class="a" style="left:479.60px;top:75.19px;line-height:8px;font-size:7.8px;color:#4e5258;transform:scaleX(0.777);transform-origin:0 50%;text-rendering:geometricPrecision">2022-01-18 14:29:03</div>
<div class="a" style="left:551.60px;top:75.19px;line-height:8px;font-size:7.8px;color:#4e5258;transform:scaleX(0.777);transform-origin:0 50%;text-rendering:geometricPrecision">2022-01-16 14:29:03</div>
<div class="a" style="left:182.10px;top:74.49px;line-height:8px;font-size:5.75px;color:#50545c">报警处理工单-压力异...</div>
<div class="a" style="left:129.10px;top:74.49px;line-height:8px;font-size:5.75px;color:#50545c">维修流程</div>
<div class="a" style="left:253.60px;top:74.49px;line-height:8px;font-size:5.75px;color:#1e1f22;margin-top:-0.4px;font-weight:500">厦门营业所</div>
<div class="a" style="left:301.80px;top:74.49px;line-height:8px;font-size:5.75px;color:#50545c">维修工单</div>
<div class="a" style="left:359.20px;top:74.49px;line-height:8px;font-size:5.75px;color:#1e1f22;margin-top:-0.4px;font-weight:700">高</div>
<div class="a" style="left:623.50px;top:74.49px;line-height:8px;font-size:5.75px;color:#3f80f2">--</div>
<div class="a" style="left:685.70px;top:74.49px;line-height:8px;font-size:5.75px;color:#1e1f22;margin-top:-0.4px">到达现场</div>
<div class="a" style="left:14.60px;top:92.25px;line-height:8px;font-size:7.8px;color:#4e5258;transform:scaleX(0.777);transform-origin:0 50%;text-rendering:geometricPrecision">5</div>
<div class="a" style="left:42.90px;top:92.25px;line-height:8px;font-size:7.8px;color:#4e5258;transform:scaleX(0.777);transform-origin:0 50%;text-rendering:geometricPrecision">20220116000002</div>
<div class="a" style="left:407.90px;top:92.25px;line-height:8px;font-size:7.8px;color:#4e5258;transform:scaleX(0.777);transform-origin:0 50%;text-rendering:geometricPrecision">2022-01-16 13:18:34</div>
<div class="a" style="left:479.60px;top:92.25px;line-height:8px;font-size:7.8px;color:#4e5258;transform:scaleX(0.777);transform-origin:0 50%;text-rendering:geometricPrecision">2022-01-18 13:18:34</div>
<div class="a" style="left:551.60px;top:92.25px;line-height:8px;font-size:7.8px;color:#4e5258;transform:scaleX(0.777);transform-origin:0 50%;text-rendering:geometricPrecision">2022-01-16 13:18:34</div>
<div class="a" style="left:182.10px;top:91.55px;line-height:8px;font-size:5.75px;color:#50545c">报警处理工单-测试进...</div>
<div class="a" style="left:129.10px;top:91.55px;line-height:8px;font-size:5.75px;color:#50545c">维修流程</div>
<div class="a" style="left:253.60px;top:91.55px;line-height:8px;font-size:5.75px;color:#1e1f22;margin-top:-0.4px;font-weight:500">厦门营业所</div>
<div class="a" style="left:301.80px;top:91.55px;line-height:8px;font-size:5.75px;color:#50545c">维修工单</div>
<div class="a" style="left:359.20px;top:91.55px;line-height:8px;font-size:5.75px;color:#1e1f22;margin-top:-0.4px;font-weight:700">紧急</div>
<div class="a" style="left:623.50px;top:91.55px;line-height:8px;font-size:5.75px;color:#3f80f2">--</div>
<div class="a" style="left:685.70px;top:91.55px;line-height:8px;font-size:5.75px;color:#1e1f22;margin-top:-0.4px">到达现场</div>
<div class="a" style="left:0;top:104.45px;width:749px;height:17.01px;background:#f9fafc"></div>
<div class="a" style="left:14.60px;top:109.31px;line-height:8px;font-size:7.8px;color:#4e5258;transform:scaleX(0.777);transform-origin:0 50%;text-rendering:geometricPrecision">6</div>
<div class="a" style="left:42.90px;top:109.31px;line-height:8px;font-size:7.8px;color:#4e5258;transform:scaleX(0.777);transform-origin:0 50%;text-rendering:geometricPrecision">20220115000005</div>
<div class="a" style="left:407.90px;top:109.31px;line-height:8px;font-size:7.8px;color:#4e5258;transform:scaleX(0.777);transform-origin:0 50%;text-rendering:geometricPrecision">2022-01-15 20:29:18</div>
<div class="a" style="left:479.60px;top:109.31px;line-height:8px;font-size:7.8px;color:#4e5258;transform:scaleX(0.777);transform-origin:0 50%;text-rendering:geometricPrecision">2022-01-17 20:29:18</div>
<div class="a" style="left:551.60px;top:109.31px;line-height:8px;font-size:7.8px;color:#4e5258;transform:scaleX(0.777);transform-origin:0 50%;text-rendering:geometricPrecision">2022-01-15 20:29:18</div>
<div class="a" style="left:182.10px;top:108.61px;line-height:8px;font-size:5.75px;color:#50545c">报警处理工单-压力异...</div>
<div class="a" style="left:129.10px;top:108.61px;line-height:8px;font-size:5.75px;color:#50545c">维修流程</div>
<div class="a" style="left:253.60px;top:108.61px;line-height:8px;font-size:5.75px;color:#1e1f22;margin-top:-0.4px;font-weight:500">厦门营业所</div>
<div class="a" style="left:301.80px;top:108.61px;line-height:8px;font-size:5.75px;color:#50545c">维修工单</div>
<div class="a" style="left:359.20px;top:108.61px;line-height:8px;font-size:5.75px;color:#1e1f22;margin-top:-0.4px;font-weight:700">高</div>
<div class="a" style="left:623.50px;top:108.61px;line-height:8px;font-size:5.75px;color:#3f80f2">--</div>
<div class="a" style="left:685.70px;top:108.61px;line-height:8px;font-size:5.75px;color:#1e1f22;margin-top:-0.4px">到达现场</div>
<div class="a" style="left:14.60px;top:126.37px;line-height:8px;font-size:7.8px;color:#4e5258;transform:scaleX(0.777);transform-origin:0 50%;text-rendering:geometricPrecision">7</div>
<div class="a" style="left:42.90px;top:126.37px;line-height:8px;font-size:7.8px;color:#4e5258;transform:scaleX(0.777);transform-origin:0 50%;text-rendering:geometricPrecision">20220115000004</div>
<div class="a" style="left:407.90px;top:126.37px;line-height:8px;font-size:7.8px;color:#4e5258;transform:scaleX(0.777);transform-origin:0 50%;text-rendering:geometricPrecision">2022-01-15 20:02:32</div>
<div class="a" style="left:479.60px;top:126.37px;line-height:8px;font-size:7.8px;color:#4e5258;transform:scaleX(0.777);transform-origin:0 50%;text-rendering:geometricPrecision">2022-01-17 20:02:32</div>
<div class="a" style="left:551.60px;top:126.37px;line-height:8px;font-size:7.8px;color:#4e5258;transform:scaleX(0.777);transform-origin:0 50%;text-rendering:geometricPrecision">2022-01-15 20:02:32</div>
<div class="a" style="left:182.10px;top:125.67px;line-height:8px;font-size:5.75px;color:#50545c">报警处理工单-测试进...</div>
<div class="a" style="left:129.10px;top:125.67px;line-height:8px;font-size:5.75px;color:#50545c">维修流程</div>
<div class="a" style="left:253.60px;top:125.67px;line-height:8px;font-size:5.75px;color:#1e1f22;margin-top:-0.4px;font-weight:500">厦门营业所</div>
<div class="a" style="left:301.80px;top:125.67px;line-height:8px;font-size:5.75px;color:#50545c">维修工单</div>
<div class="a" style="left:359.20px;top:125.67px;line-height:8px;font-size:5.75px;color:#1e1f22;margin-top:-0.4px;font-weight:700">紧急</div>
<div class="a" style="left:623.50px;top:125.67px;line-height:8px;font-size:5.75px;color:#3f80f2">--</div>
<div class="a" style="left:685.70px;top:125.67px;line-height:8px;font-size:5.75px;color:#1e1f22;margin-top:-0.4px">到达现场</div>
<div class="a" style="left:0;top:138.47px;width:749px;height:17.01px;background:#f9fafc"></div>
<div class="a" style="left:14.60px;top:143.43px;line-height:8px;font-size:7.8px;color:#4e5258;transform:scaleX(0.777);transform-origin:0 50%;text-rendering:geometricPrecision">8</div>
<div class="a" style="left:42.90px;top:143.43px;line-height:8px;font-size:7.8px;color:#4e5258;transform:scaleX(0.777);transform-origin:0 50%;text-rendering:geometricPrecision">20220115000003</div>
<div class="a" style="left:407.90px;top:143.43px;line-height:8px;font-size:7.8px;color:#4e5258;transform:scaleX(0.777);transform-origin:0 50%;text-rendering:geometricPrecision">2022-01-15 14:29:07</div>
<div class="a" style="left:479.60px;top:143.43px;line-height:8px;font-size:7.8px;color:#4e5258;transform:scaleX(0.777);transform-origin:0 50%;text-rendering:geometricPrecision">2022-01-17 14:29:07</div>
<div class="a" style="left:551.60px;top:143.43px;line-height:8px;font-size:7.8px;color:#4e5258;transform:scaleX(0.777);transform-origin:0 50%;text-rendering:geometricPrecision">2022-01-15 14:29:07</div>
<div class="a" style="left:182.10px;top:142.73px;line-height:8px;font-size:5.75px;color:#50545c">报警处理工单-压力异...</div>
<div class="a" style="left:129.10px;top:142.73px;line-height:8px;font-size:5.75px;color:#50545c">维修流程</div>
<div class="a" style="left:253.60px;top:142.73px;line-height:8px;font-size:5.75px;color:#1e1f22;margin-top:-0.4px;font-weight:500">厦门营业所</div>
<div class="a" style="left:301.80px;top:142.73px;line-height:8px;font-size:5.75px;color:#50545c">维修工单</div>
<div class="a" style="left:359.20px;top:142.73px;line-height:8px;font-size:5.75px;color:#1e1f22;margin-top:-0.4px;font-weight:700">高</div>
<div class="a" style="left:623.50px;top:142.73px;line-height:8px;font-size:5.75px;color:#3f80f2">--</div>
<div class="a" style="left:685.70px;top:142.73px;line-height:8px;font-size:5.75px;color:#1e1f22;margin-top:-0.4px">到达现场</div>
<div class="a" style="left:14.60px;top:160.49px;line-height:8px;font-size:7.8px;color:#4e5258;transform:scaleX(0.777);transform-origin:0 50%;text-rendering:geometricPrecision">9</div>
<div class="a" style="left:42.90px;top:160.49px;line-height:8px;font-size:7.8px;color:#4e5258;transform:scaleX(0.777);transform-origin:0 50%;text-rendering:geometricPrecision">20220115000002</div>
<div class="a" style="left:407.90px;top:160.49px;line-height:8px;font-size:7.8px;color:#4e5258;transform:scaleX(0.777);transform-origin:0 50%;text-rendering:geometricPrecision">2022-01-15 08:29:22</div>
<div class="a" style="left:479.60px;top:160.49px;line-height:8px;font-size:7.8px;color:#4e5258;transform:scaleX(0.777);transform-origin:0 50%;text-rendering:geometricPrecision">2022-01-17 08:29:22</div>
<div class="a" style="left:551.60px;top:160.49px;line-height:8px;font-size:7.8px;color:#4e5258;transform:scaleX(0.777);transform-origin:0 50%;text-rendering:geometricPrecision">2022-01-15 08:29:22</div>
<div class="a" style="left:182.10px;top:159.79px;line-height:8px;font-size:5.75px;color:#50545c">报警处理工单-压力异...</div>
<div class="a" style="left:129.10px;top:159.79px;line-height:8px;font-size:5.75px;color:#50545c">维修流程</div>
<div class="a" style="left:253.60px;top:159.79px;line-height:8px;font-size:5.75px;color:#1e1f22;margin-top:-0.4px;font-weight:500">厦门营业所</div>
<div class="a" style="left:301.80px;top:159.79px;line-height:8px;font-size:5.75px;color:#50545c">维修工单</div>
<div class="a" style="left:359.20px;top:159.79px;line-height:8px;font-size:5.75px;color:#1e1f22;margin-top:-0.4px;font-weight:700">高</div>
<div class="a" style="left:623.50px;top:159.79px;line-height:8px;font-size:5.75px;color:#3f80f2">--</div>
<div class="a" style="left:685.70px;top:159.79px;line-height:8px;font-size:5.75px;color:#1e1f22;margin-top:-0.4px">到达现场</div>
<div class="a" style="left:0;top:172.49px;width:749px;height:17.01px;background:#f9fafc"></div>
<div class="a" style="left:14.60px;top:177.54px;line-height:8px;font-size:7.8px;color:#4e5258;transform:scaleX(0.777);transform-origin:0 50%;text-rendering:geometricPrecision">10</div>
<div class="a" style="left:42.90px;top:177.54px;line-height:8px;font-size:7.8px;color:#4e5258;transform:scaleX(0.777);transform-origin:0 50%;text-rendering:geometricPrecision">20220115000001</div>
<div class="a" style="left:407.90px;top:177.54px;line-height:8px;font-size:7.8px;color:#4e5258;transform:scaleX(0.777);transform-origin:0 50%;text-rendering:geometricPrecision">2022-01-15 02:29:12</div>
<div class="a" style="left:479.60px;top:177.54px;line-height:8px;font-size:7.8px;color:#4e5258;transform:scaleX(0.777);transform-origin:0 50%;text-rendering:geometricPrecision">2022-01-17 02:29:12</div>
<div class="a" style="left:551.60px;top:177.54px;line-height:8px;font-size:7.8px;color:#4e5258;transform:scaleX(0.777);transform-origin:0 50%;text-rendering:geometricPrecision">2022-01-15 02:29:12</div>
<div class="a" style="left:182.10px;top:176.84px;line-height:8px;font-size:5.75px;color:#50545c">报警处理工单-压力异...</div>
<div class="a" style="left:129.10px;top:176.84px;line-height:8px;font-size:5.75px;color:#50545c">维修流程</div>
<div class="a" style="left:253.60px;top:176.84px;line-height:8px;font-size:5.75px;color:#1e1f22;margin-top:-0.4px;font-weight:500">厦门营业所</div>
<div class="a" style="left:301.80px;top:176.84px;line-height:8px;font-size:5.75px;color:#50545c">维修工单</div>
<div class="a" style="left:359.20px;top:176.84px;line-height:8px;font-size:5.75px;color:#1e1f22;margin-top:-0.4px;font-weight:700">高</div>
<div class="a" style="left:623.50px;top:176.84px;line-height:8px;font-size:5.75px;color:#3f80f2">--</div>
<div class="a" style="left:685.70px;top:176.84px;line-height:8px;font-size:5.75px;color:#1e1f22;margin-top:-0.4px">到达现场</div>
<div class="a" style="left:14.60px;top:194.60px;line-height:8px;font-size:7.8px;color:#4e5258;transform:scaleX(0.777);transform-origin:0 50%;text-rendering:geometricPrecision">11</div>
<div class="a" style="left:42.90px;top:194.60px;line-height:8px;font-size:7.8px;color:#4e5258;transform:scaleX(0.777);transform-origin:0 50%;text-rendering:geometricPrecision">20220114000001</div>
<div class="a" style="left:407.90px;top:194.60px;line-height:8px;font-size:7.8px;color:#4e5258;transform:scaleX(0.777);transform-origin:0 50%;text-rendering:geometricPrecision">2022-01-14 20:41:17</div>
<div class="a" style="left:479.60px;top:194.60px;line-height:8px;font-size:7.8px;color:#4e5258;transform:scaleX(0.777);transform-origin:0 50%;text-rendering:geometricPrecision">2022-01-16 20:41:17</div>
<div class="a" style="left:551.60px;top:194.60px;line-height:8px;font-size:7.8px;color:#4e5258;transform:scaleX(0.777);transform-origin:0 50%;text-rendering:geometricPrecision">2022-01-14 20:41:17</div>
<div class="a" style="left:182.10px;top:193.91px;line-height:8px;font-size:5.75px;color:#50545c">报警处理工单-测试进...</div>
<div class="a" style="left:129.10px;top:193.91px;line-height:8px;font-size:5.75px;color:#50545c">维修流程</div>
<div class="a" style="left:253.60px;top:193.91px;line-height:8px;font-size:5.75px;color:#1e1f22;margin-top:-0.4px;font-weight:500">厦门营业所</div>
<div class="a" style="left:301.80px;top:193.91px;line-height:8px;font-size:5.75px;color:#50545c">维修工单</div>
<div class="a" style="left:359.20px;top:193.91px;line-height:8px;font-size:5.75px;color:#1e1f22;margin-top:-0.4px;font-weight:700">紧急</div>
<div class="a" style="left:623.50px;top:193.91px;line-height:8px;font-size:5.75px;color:#3f80f2">--</div>
<div class="a" style="left:685.70px;top:193.91px;line-height:8px;font-size:5.75px;color:#1e1f22;margin-top:-0.4px">到达现场</div>
<div class="a" style="left:0;top:206.51px;width:749px;height:17.01px;background:#f9fafc"></div>
<div class="a" style="left:14.60px;top:211.66px;line-height:8px;font-size:7.8px;color:#4e5258;transform:scaleX(0.777);transform-origin:0 50%;text-rendering:geometricPrecision">12</div>
<div class="a" style="left:42.90px;top:211.66px;line-height:8px;font-size:7.8px;color:#4e5258;transform:scaleX(0.777);transform-origin:0 50%;text-rendering:geometricPrecision">20220113000003</div>
<div class="a" style="left:407.90px;top:211.66px;line-height:8px;font-size:7.8px;color:#4e5258;transform:scaleX(0.777);transform-origin:0 50%;text-rendering:geometricPrecision">2022-01-13 20:29:09</div>
<div class="a" style="left:479.60px;top:211.66px;line-height:8px;font-size:7.8px;color:#4e5258;transform:scaleX(0.777);transform-origin:0 50%;text-rendering:geometricPrecision">2022-01-15 20:29:09</div>
<div class="a" style="left:551.60px;top:211.66px;line-height:8px;font-size:7.8px;color:#4e5258;transform:scaleX(0.777);transform-origin:0 50%;text-rendering:geometricPrecision">2022-01-13 20:29:09</div>
<div class="a" style="left:182.10px;top:210.97px;line-height:8px;font-size:5.75px;color:#50545c">报警处理工单-压力异...</div>
<div class="a" style="left:129.10px;top:210.97px;line-height:8px;font-size:5.75px;color:#50545c">维修流程</div>
<div class="a" style="left:253.60px;top:210.97px;line-height:8px;font-size:5.75px;color:#1e1f22;margin-top:-0.4px;font-weight:500">厦门营业所</div>
<div class="a" style="left:301.80px;top:210.97px;line-height:8px;font-size:5.75px;color:#50545c">维修工单</div>
<div class="a" style="left:359.20px;top:210.97px;line-height:8px;font-size:5.75px;color:#1e1f22;margin-top:-0.4px;font-weight:700">高</div>
<div class="a" style="left:623.50px;top:210.97px;line-height:8px;font-size:5.75px;color:#3f80f2">--</div>
<div class="a" style="left:685.70px;top:210.97px;line-height:8px;font-size:5.75px;color:#1e1f22;margin-top:-0.4px">到达现场</div>
<div class="a" style="left:14.60px;top:228.72px;line-height:8px;font-size:7.8px;color:#4e5258;transform:scaleX(0.777);transform-origin:0 50%;text-rendering:geometricPrecision">13</div>
<div class="a" style="left:42.90px;top:228.72px;line-height:8px;font-size:7.8px;color:#4e5258;transform:scaleX(0.777);transform-origin:0 50%;text-rendering:geometricPrecision">20220113000002</div>
<div class="a" style="left:407.90px;top:228.72px;line-height:8px;font-size:7.8px;color:#4e5258;transform:scaleX(0.777);transform-origin:0 50%;text-rendering:geometricPrecision">2022-01-13 14:29:10</div>
<div class="a" style="left:479.60px;top:228.72px;line-height:8px;font-size:7.8px;color:#4e5258;transform:scaleX(0.777);transform-origin:0 50%;text-rendering:geometricPrecision">2022-01-15 14:29:10</div>
<div class="a" style="left:551.60px;top:228.72px;line-height:8px;font-size:7.8px;color:#4e5258;transform:scaleX(0.777);transform-origin:0 50%;text-rendering:geometricPrecision">2022-01-13 14:29:10</div>
<div class="a" style="left:182.10px;top:228.02px;line-height:8px;font-size:5.75px;color:#50545c">报警处理工单-压力异...</div>
<div class="a" style="left:129.10px;top:228.02px;line-height:8px;font-size:5.75px;color:#50545c">维修流程</div>
<div class="a" style="left:253.60px;top:228.02px;line-height:8px;font-size:5.75px;color:#1e1f22;margin-top:-0.4px;font-weight:500">厦门营业所</div>
<div class="a" style="left:301.80px;top:228.02px;line-height:8px;font-size:5.75px;color:#50545c">维修工单</div>
<div class="a" style="left:359.20px;top:228.02px;line-height:8px;font-size:5.75px;color:#1e1f22;margin-top:-0.4px;font-weight:700">高</div>
<div class="a" style="left:623.50px;top:228.02px;line-height:8px;font-size:5.75px;color:#3f80f2">--</div>
<div class="a" style="left:685.70px;top:228.02px;line-height:8px;font-size:5.75px;color:#1e1f22;margin-top:-0.4px">到达现场</div>
<div class="a" style="left:0;top:240.53px;width:749px;height:17.01px;background:#f9fafc"></div>
<div class="a" style="left:14.60px;top:245.79px;line-height:8px;font-size:7.8px;color:#4e5258;transform:scaleX(0.777);transform-origin:0 50%;text-rendering:geometricPrecision">14</div>
<div class="a" style="left:42.90px;top:245.79px;line-height:8px;font-size:7.8px;color:#4e5258;transform:scaleX(0.777);transform-origin:0 50%;text-rendering:geometricPrecision">20220113000001</div>
<div class="a" style="left:407.90px;top:245.79px;line-height:8px;font-size:7.8px;color:#4e5258;transform:scaleX(0.777);transform-origin:0 50%;text-rendering:geometricPrecision">2022-01-13 08:29:22</div>
<div class="a" style="left:479.60px;top:245.79px;line-height:8px;font-size:7.8px;color:#4e5258;transform:scaleX(0.777);transform-origin:0 50%;text-rendering:geometricPrecision">2022-01-15 08:29:22</div>
<div class="a" style="left:551.60px;top:245.79px;line-height:8px;font-size:7.8px;color:#4e5258;transform:scaleX(0.777);transform-origin:0 50%;text-rendering:geometricPrecision">2022-01-13 08:29:22</div>
<div class="a" style="left:182.10px;top:245.09px;line-height:8px;font-size:5.75px;color:#50545c">报警处理工单-压力异...</div>
<div class="a" style="left:129.10px;top:245.09px;line-height:8px;font-size:5.75px;color:#50545c">维修流程</div>
<div class="a" style="left:253.60px;top:245.09px;line-height:8px;font-size:5.75px;color:#1e1f22;margin-top:-0.4px;font-weight:500">厦门营业所</div>
<div class="a" style="left:301.80px;top:245.09px;line-height:8px;font-size:5.75px;color:#50545c">维修工单</div>
<div class="a" style="left:359.20px;top:245.09px;line-height:8px;font-size:5.75px;color:#1e1f22;margin-top:-0.4px;font-weight:700">高</div>
<div class="a" style="left:623.50px;top:245.09px;line-height:8px;font-size:5.75px;color:#3f80f2">--</div>
<div class="a" style="left:685.70px;top:245.09px;line-height:8px;font-size:5.75px;color:#1e1f22;margin-top:-0.4px">到达现场</div>
<div class="a" style="left:14.60px;top:262.84px;line-height:8px;font-size:7.8px;color:#4e5258;transform:scaleX(0.777);transform-origin:0 50%;text-rendering:geometricPrecision">15</div>
<div class="a" style="left:42.90px;top:262.84px;line-height:8px;font-size:7.8px;color:#4e5258;transform:scaleX(0.777);transform-origin:0 50%;text-rendering:geometricPrecision">20220112000002</div>
<div class="a" style="left:407.90px;top:262.84px;line-height:8px;font-size:7.8px;color:#4e5258;transform:scaleX(0.777);transform-origin:0 50%;text-rendering:geometricPrecision">2022-01-12 20:29:11</div>
<div class="a" style="left:479.60px;top:262.84px;line-height:8px;font-size:7.8px;color:#4e5258;transform:scaleX(0.777);transform-origin:0 50%;text-rendering:geometricPrecision">2022-01-14 20:29:11</div>
<div class="a" style="left:551.60px;top:262.84px;line-height:8px;font-size:7.8px;color:#4e5258;transform:scaleX(0.777);transform-origin:0 50%;text-rendering:geometricPrecision">2022-01-12 20:29:11</div>
<div class="a" style="left:182.10px;top:262.14px;line-height:8px;font-size:5.75px;color:#50545c">报警处理工单-压力异...</div>
<div class="a" style="left:129.10px;top:262.14px;line-height:8px;font-size:5.75px;color:#50545c">维修流程</div>
<div class="a" style="left:253.60px;top:262.14px;line-height:8px;font-size:5.75px;color:#1e1f22;margin-top:-0.4px;font-weight:500">厦门营业所</div>
<div class="a" style="left:301.80px;top:262.14px;line-height:8px;font-size:5.75px;color:#50545c">维修工单</div>
<div class="a" style="left:359.20px;top:262.14px;line-height:8px;font-size:5.75px;color:#1e1f22;margin-top:-0.4px;font-weight:700">高</div>
<div class="a" style="left:623.50px;top:262.14px;line-height:8px;font-size:5.75px;color:#3f80f2">--</div>
<div class="a" style="left:685.70px;top:262.14px;line-height:8px;font-size:5.75px;color:#1e1f22;margin-top:-0.4px">到达现场</div>
</div>
<div class="a" style="left:807px;top:148px;width:53px;height:272px;background:#fff;box-shadow:-1px 0 2px rgba(0,0,0,0.10)"></div>
<div class="a" style="left:807px;top:148px;width:53px;height:19.3px;background:#f4f7fc"></div>
<div class="a" style="left:822px;top:153.2px;font-size:5.7px;line-height:8px;color:#56688e">操作</div>
<div class="a" style="left:822px;top:171.31px;font-size:5.8px;line-height:8px;color:#2a6cf0;font-weight:500">查看详情</div>
<div class="a" style="left:807px;top:184.41px;width:53px;height:17.01px;background:#f9fafc"></div>
<div class="a" style="left:822px;top:188.37px;font-size:5.8px;line-height:8px;color:#2a6cf0;font-weight:500">查看详情</div>
<div class="a" style="left:822px;top:205.43px;font-size:5.8px;line-height:8px;color:#2a6cf0;font-weight:500">查看详情</div>
<div class="a" style="left:807px;top:218.43px;width:53px;height:17.01px;background:#f9fafc"></div>
<div class="a" style="left:822px;top:222.49px;font-size:5.8px;line-height:8px;color:#2a6cf0;font-weight:500">查看详情</div>
<div class="a" style="left:822px;top:239.54px;font-size:5.8px;line-height:8px;color:#2a6cf0;font-weight:500">查看详情</div>
<div class="a" style="left:807px;top:252.45px;width:53px;height:17.01px;background:#f9fafc"></div>
<div class="a" style="left:822px;top:256.61px;font-size:5.8px;line-height:8px;color:#2a6cf0;font-weight:500">查看详情</div>
<div class="a" style="left:822px;top:273.67px;font-size:5.8px;line-height:8px;color:#2a6cf0;font-weight:500">查看详情</div>
<div class="a" style="left:807px;top:286.47px;width:53px;height:17.01px;background:#f9fafc"></div>
<div class="a" style="left:822px;top:290.73px;font-size:5.8px;line-height:8px;color:#2a6cf0;font-weight:500">查看详情</div>
<div class="a" style="left:822px;top:307.78px;font-size:5.8px;line-height:8px;color:#2a6cf0;font-weight:500">查看详情</div>
<div class="a" style="left:807px;top:320.49px;width:53px;height:17.01px;background:#f9fafc"></div>
<div class="a" style="left:822px;top:324.84px;font-size:5.8px;line-height:8px;color:#2a6cf0;font-weight:500">查看详情</div>
<div class="a" style="left:822px;top:341.90px;font-size:5.8px;line-height:8px;color:#2a6cf0;font-weight:500">查看详情</div>
<div class="a" style="left:807px;top:354.51px;width:53px;height:17.01px;background:#f9fafc"></div>
<div class="a" style="left:822px;top:358.96px;font-size:5.8px;line-height:8px;color:#2a6cf0;font-weight:500">查看详情</div>
<div class="a" style="left:822px;top:376.02px;font-size:5.8px;line-height:8px;color:#2a6cf0;font-weight:500">查看详情</div>
<div class="a" style="left:807px;top:388.53px;width:53px;height:17.01px;background:#f9fafc"></div>
<div class="a" style="left:822px;top:393.08px;font-size:5.8px;line-height:8px;color:#2a6cf0;font-weight:500">查看详情</div>
<div class="a" style="left:822px;top:410.14px;font-size:5.8px;line-height:8px;color:#2a6cf0;font-weight:500">查看详情</div>
<div class="a" style="left:855.6px;top:167.3px;width:3.6px;height:252px;background:#f6f6f7"></div>
<div class="a" style="left:855.8px;top:167.3px;width:3.3px;height:186px;background:#d3d4d7;border-radius:1px"></div>
<div class="a" style="left:111.9px;top:420.1px;width:551.4px;height:3.6px;background:#d2d3d6;border-radius:1px"></div>
<!-- pagination -->
<div class="a" style="left:621.9px;top:434.8px;font-size:6.2px;line-height:8px;color:#7a7e86">共<span style="display:inline-block;font-size:7.6px;letter-spacing:0.05px;text-rendering:geometricPrecision;width:17.6px;padding-left:0.5px;vertical-align:-0.3px">5260</span>条</div>
<div class="a" style="left:655.1px;top:433.1px;width:11.5px;height:11.4px;border:0.7px solid #dfe1e5;border-radius:2px"></div>
<svg class="a" style="left:659.30px;top:436px" width="3.2" height="5.2" viewBox="0 0 3.2 5.2"><path d="M2.6 0.4L0.6 2.6L2.6 4.8" stroke="#606266" stroke-width="0.6" fill="none"/></svg>
<div class="a" style="left:670.3px;top:433.1px;width:11.5px;height:11.4px;background:#3e7ef3;border-radius:2px;color:#fff;font-size:6.6px;line-height:11.4px;text-align:center;text-rendering:geometricPrecision;font-weight:500">1</div>
<div class="a" style="left:685.5px;top:433.1px;width:11.5px;height:11.4px;border:0.7px solid #dfe1e5;border-radius:2px;color:#606266;font-size:6.9px;line-height:10px;text-align:center">2</div>
<div class="a" style="left:701px;top:433.1px;width:11.5px;height:11.4px;border:0.7px solid #dfe1e5;border-radius:2px;color:#606266;font-size:6.9px;line-height:10px;text-align:center">3</div>
<div class="a" style="left:716.4px;top:433.1px;width:11.5px;height:11.4px;border:0.7px solid #dfe1e5;border-radius:2px;color:#606266;font-size:6.9px;line-height:10px;text-align:center">4</div>
<div class="a" style="left:731.8px;top:433.1px;width:11.5px;height:11.4px;border:0.7px solid #dfe1e5;border-radius:2px;color:#606266;font-size:6.9px;line-height:10px;text-align:center">5</div>
<div class="a" style="left:766px;top:433.1px;width:18.3px;height:11.4px;border:0.7px solid #dfe1e5;border-radius:2px;color:#606266;font-size:6.9px;line-height:10px;text-align:center">263</div>
<div class="a" style="left:788.3px;top:433.1px;width:11.5px;height:11.4px;border:0.7px solid #dfe1e5;border-radius:2px"></div>
<svg class="a" style="left:792.50px;top:436px" width="3.2" height="5.2" viewBox="0 0 3.2 5.2"><path d="M0.6 0.4L2.6 2.6L0.6 4.8" stroke="#606266" stroke-width="0.6" fill="none"/></svg>
<svg class="a" style="left:749px;top:436px" width="11" height="3" viewBox="0 0 11 3"><circle cx="1.4" cy="1.5" r="0.75" fill="#606266"/><circle cx="5.5" cy="1.5" r="0.75" fill="#606266"/><circle cx="9.6" cy="1.5" r="0.75" fill="#606266"/></svg>
<div class="a" style="left:807.4px;top:433.1px;width:42px;height:11.4px;border:0.7px solid #dfe1e5;border-radius:2px"></div>
<div class="a" style="left:813px;top:434.6px;font-size:6.3px;line-height:8px;color:#6a6e76"><span style="font-size:6.9px">20</span> 条/页</div>
<svg class="a" style="left:837.6px;top:437.6px" width="4.4" height="3" viewBox="0 0 4.4 3"><path d="M0.4 0.4L2.2 2.4L4 0.4" stroke="#7a7e86" stroke-width="0.6" fill="none"/></svg>
<!-- watermark -->
<div class="a" style="left:706.3px;top:403.6px;font-size:12.8px;line-height:15px;color:rgba(110,110,110,0.55)">激活 Windows</div>
<div class="a" style="left:706.5px;top:420.6px;font-size:9.3px;line-height:11px;color:rgba(110,110,110,0.55)">转到“设置”以激活 Windows。</div>
</div></body></html>
